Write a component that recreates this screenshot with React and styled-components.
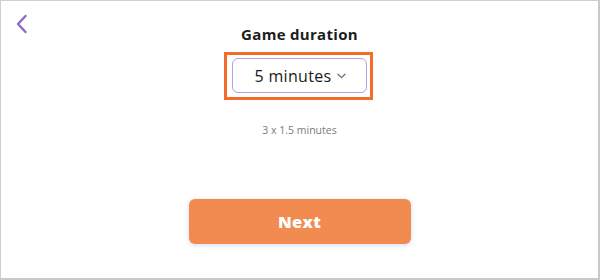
import React from 'react';
import styled, { createGlobalStyle } from 'styled-components';

const Global = createGlobalStyle`
  html, body {
    margin: 0;
    padding: 0;
    background: #fff;
  }
  * { box-sizing: border-box; }
`;

function BackIcon() {
  return (
    <svg width="14" height="20" viewBox="0 0 14 20">
      <polyline
        points="10.5,2 3,10 10.5,18"
        fill="none"
        stroke="#8d6bc2"
        strokeWidth="2.4"
        strokeLinecap="round"
        strokeLinejoin="round"
      />
    </svg>
  );
}

function Chevron() {
  return (
    <svg width="9" height="6" viewBox="0 0 9 6">
      <polyline
        points="1,1.2 4.5,4.6 8,1.2"
        fill="none"
        stroke="#707070"
        strokeWidth="1.3"
        strokeLinecap="round"
        strokeLinejoin="round"
      />
    </svg>
  );
}

export default function App() {
  return (
    <>
      <Global />
      <Page>
        <Header>
          <BackButton aria-label="Back">
            <BackIcon />
          </BackButton>
          <Title>Game duration</Title>
          <span />
        </Header>

        <Highlight>
          <Select>
            <SelectText>5 minutes</SelectText>
            <Chevron />
          </Select>
        </Highlight>

        <Hint>3 x 1.5 minutes</Hint>

        <NextButton>Next</NextButton>
      </Page>
    </>
  );
}

const Page = styled.div`
  width: 600px;
  height: 280px;
  border-top: 1px solid #cfcfcf;
  border-left: 1px solid #cfcfcf;
  border-right: 2px solid #c9c9c9;
  border-bottom: 2px solid #c9c9c9;
  display: flex;
  flex-direction: column;
  align-items: center;
  font-family: "Open Sans", "Liberation Sans", sans-serif;
  color: #1e1e1e;
`;

const Header = styled.div`
  width: 100%;
  display: grid;
  grid-template-columns: 48px 1fr 48px;
  align-items: start;
  padding-top: 12px;
`;

const BackButton = styled.button`
  border: 0;
  background: none;
  padding: 0;
  margin: 1px 0 0 14px;
  width: 14px;
  height: 20px;
  display: flex;
  cursor: pointer;
`;

const Title = styled.h1`
  margin: 11px 0 0;
  text-align: center;
  font-family: "Open Sans", "Liberation Sans", sans-serif;
  font-size: 15px;
  font-weight: 700;
  line-height: 20px;
  letter-spacing: 0.3px;
  color: #1c1c1c;
`;

const Highlight = styled.div`
  margin-top: 8px;
  margin-left: -2px;
  padding: 3px 3px 4px 5px;
  border: 3px solid #f36c2b;
`;

const Select = styled.div`
  width: 135px;
  height: 35px;
  border: 1px solid #b79ee6;
  border-radius: 6px;
  display: flex;
  align-items: center;
  justify-content: center;
  gap: 6px;
  padding-left: 2px;
`;

const SelectText = styled.span`
  font-size: 16px;
  font-weight: 500;
  color: #1a1a1a;
  letter-spacing: 0.3px;
`;

const Hint = styled.p`
  margin: 22px 0 0;
  font-size: 10.5px;
  color: #7a7a7a;
  line-height: 16px;
`;

const NextButton = styled.button`
  margin-top: 61px;
  width: 222px;
  height: 45px;
  border: 0;
  border-radius: 6px;
  background: #f28b50;
  color: #fff;
  font-family: "Open Sans", "Liberation Sans", sans-serif;
  font-size: 16.5px;
  font-weight: 800;
  letter-spacing: 0.3px;
  box-shadow: 0 1px 5px rgba(150, 160, 230, 0.4);
  cursor: pointer;
`;
